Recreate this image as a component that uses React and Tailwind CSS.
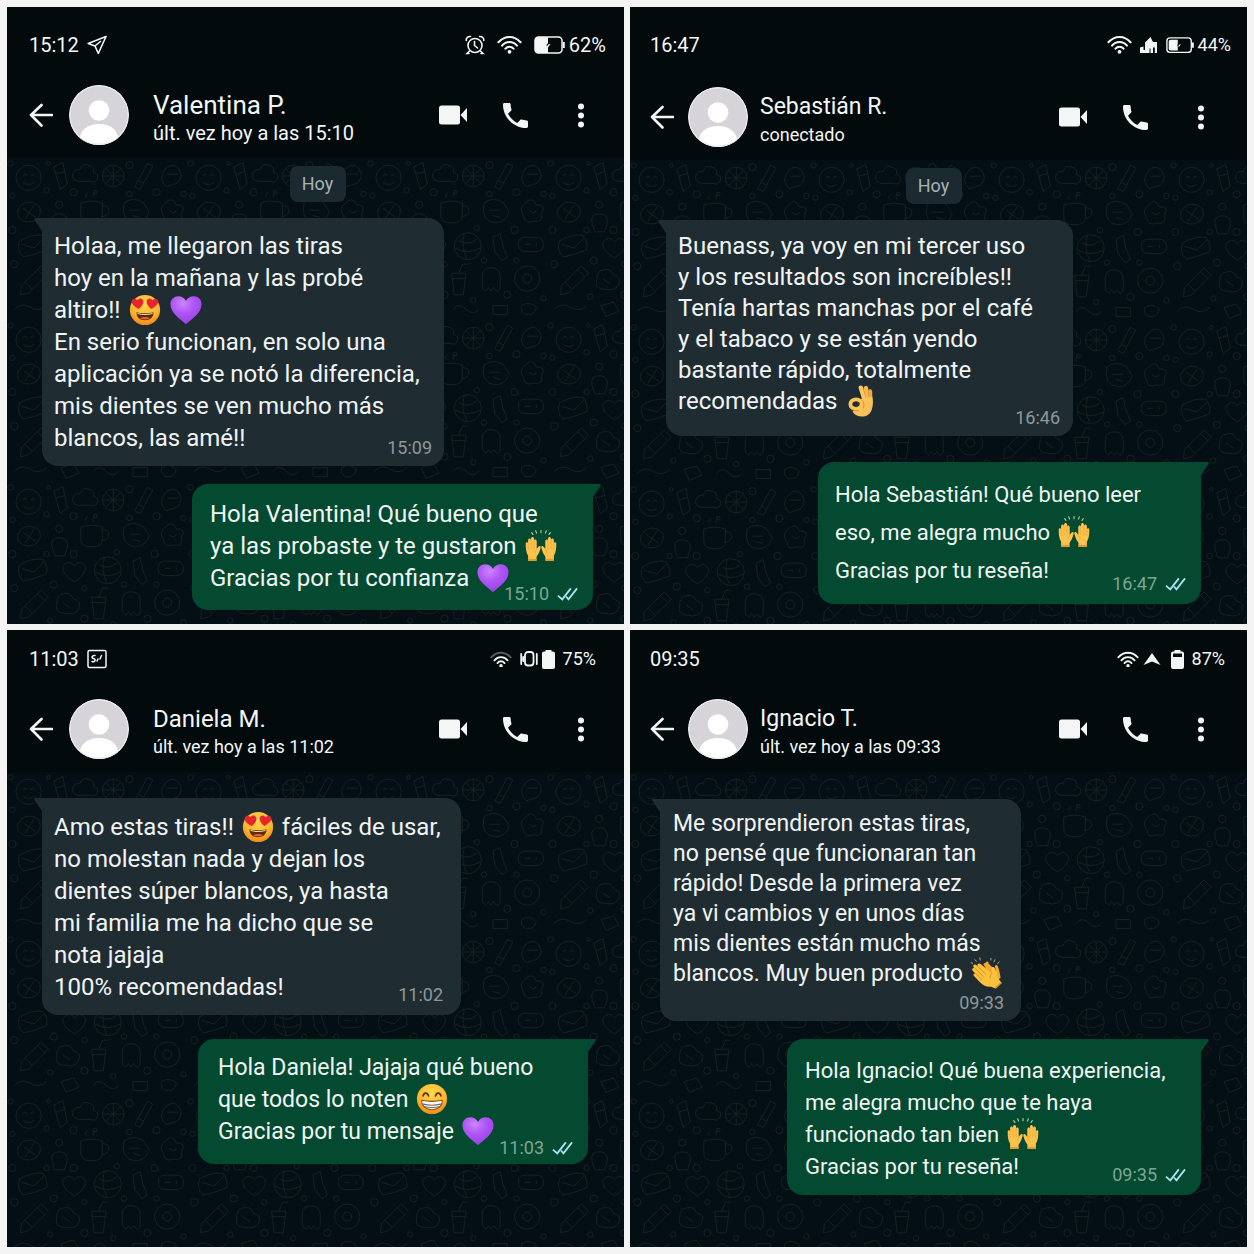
import { clsx } from 'clsx';

/* Emoji */
function Emoji({ label, children }) {
  return (
    <svg role="img" aria-label={label} viewBox="0 0 36 36" className="mx-0.5 -mt-1 inline-block size-8 align-middle">
      {children}
    </svg>
  );
}

const HeartEyes = () => (
  <Emoji label="cara con ojos de corazón">
    <defs>
      <radialGradient id="face" cx="0.5" cy="0.3" r="0.75">
        <stop offset="0" stopColor="#ffd94a" />
        <stop offset="0.6" stopColor="#fdb62f" />
        <stop offset="1" stopColor="#ee8112" />
      </radialGradient>
    </defs>
    <circle cx="18" cy="18" r="17" fill="url(#face)" />
    <path d="M11 17C6.500 14.500 2.500 11.500 3 8C3.500 4.800 7.500 4.200 9.600 7C11.500 4.200 15.500 4.700 16.200 8C16.700 11.500 14 14.500 11 17Z" fill="#e5262d" />
    <path d="M25 17C29.500 14.500 33.500 11.500 33 8C32.500 4.800 28.500 4.200 26.400 7C24.500 4.200 20.500 4.700 19.800 8C19.300 11.500 22 14.500 25 17Z" fill="#e5262d" />
    <path d="M8.500 20.500C14 22 22 22 27.500 20.500C28 25.500 24 29.500 18 29.500S8 25.500 8.500 20.500Z" fill="#5f2a0a" />
    <path d="M9.500 21.500C15 23 21 23 26.500 21.500V22.600C21 24 15 24 9.500 22.600Z" fill="#f3dcb8" />
    <path d="M12.500 27.200C15 25.500 21 25.500 23.500 27.200C21.500 29 14.500 29 12.500 27.200Z" fill="#d8683a" />
  </Emoji>
);

const Grin = () => (
  <Emoji label="cara sonriente">
    <circle cx="18" cy="18" r="17" fill="url(#face)" />
    <path d="M8 14.500C9 10.500 13 10.500 14 14.500M22 14.500C23 10.500 27 10.500 28 14.500" fill="none" stroke="#59300d" strokeWidth="2" strokeLinecap="round" />
    <path d="M6.500 19.500C14 21 22 21 29.500 19.500C30 26 25 30 18 30S6 26 6.500 19.500Z" fill="#fffdf5" stroke="#8a4b12" strokeWidth="1.200" />
    <path d="M7 23.500C14 25.500 22 25.500 29 23.500M8.500 26.500C15 28 21 28 27.500 26.500" fill="none" stroke="#6f6a62" strokeWidth="1.300" />
  </Emoji>
);

const PurpleHeart = () => (
  <Emoji label="corazón morado">
    <defs>
      <radialGradient id="heart" cx="0.4" cy="0.25" r="0.8">
        <stop offset="0" stopColor="#cb86fb" />
        <stop offset="0.45" stopColor="#b055f6" />
        <stop offset="1" stopColor="#9540e0" />
      </radialGradient>
    </defs>
    <path d="M18 34C12 28.500 0.500 21.500 0.500 11.500C0.500 6 4.500 2.500 9.300 2.500C13 2.500 16.500 4.600 18 8C19.500 4.600 23 2.500 26.700 2.500C31.500 2.500 35.500 6 35.500 11.500C35.500 21.500 24 28.500 18 34Z" fill="url(#heart)" />
  </Emoji>
);

const RaisedHand = () => (
  <>
    <path d="M3.500 34.500V29C1.300 25.500 0.700 20.500 0.800 15.500C0.800 13.300 3.200 13.300 3.500 15.300V11.500C3.600 8.800 6.500 8.800 6.800 11.200V9.800C7.100 7.300 10 7.400 10.200 10V12C10.600 10 13 10.200 13.200 12.500V21.500C14 20 15 18.500 16.300 18C18 17.700 17.900 19.800 17.200 21.500C16 25.500 14.800 28 13 30V34.500Z" fill="#fcc34c" />
    <path d="M3.500 16V22M6.800 11.500V21.500M10.200 12V21.500M13.200 21.500C12 22.500 11.500 24 11.500 25.500" fill="none" stroke="#e6a33a" strokeWidth="0.800" strokeLinecap="round" />
    <path d="M3.500 32.500H13V34.500H3.500Z" fill="#e99a2b" />
  </>
);

const RaisedHands = () => (
  <Emoji label="manos levantadas">
    <RaisedHand />
    <g transform="translate(36 0) scale(-1 1)">
      <RaisedHand />
    </g>
    <path d="M9 5L7.500 3M13 3.500L12 0.800M18 3V0.500M23 3.500L24 0.800M27 5L28.500 3" stroke="#c3cf9c" strokeWidth="1.200" strokeLinecap="round" />
  </Emoji>
);

const OkHand = () => (
  <Emoji label="mano en señal de ok">
    <g fill="none" strokeLinecap="round">
      <path d="M28.300 7L28.500 20" stroke="#eda944" strokeWidth="4.600" />
      <path d="M23.500 3.500L25.800 18" stroke="#f6b94f" strokeWidth="5" />
      <path d="M17.800 3L22.500 18" stroke="#fbc862" strokeWidth="5" />
      <path d="M20.500 4L24 15M26 5.500L27.200 16" stroke="#d98f30" strokeWidth="0.800" />
    </g>
    <path d="M19 15L30.700 13C31.800 18 31.800 23 30 28C28 33 24 35.500 19 35.500C14.500 35.500 10.500 33.500 8.500 30L14 25Z" fill="#f9c159" />
    <ellipse cx="12.500" cy="21.500" rx="6.400" ry="5.200" fill="none" stroke="#fbc55c" strokeWidth="4.600" />
    <ellipse cx="12.500" cy="21.500" rx="4" ry="2.900" fill="#26302f" />
    <path d="M5.500 25.500C7.500 28.500 11 29.500 15 28.500M19.500 17.500C21.500 19.500 22 23 20.500 26" fill="none" stroke="#d98f30" strokeWidth="1" strokeLinecap="round" />
  </Emoji>
);

const Clap = () => (
  <Emoji label="aplauso">
    <path d="M15 8L18.500 5.500C20 4.500 21.500 6 20.800 7.400L29.500 16L28.200 11.500C27.700 9 30.200 8.300 31.200 10.300C33 14.500 33.500 18 34.500 23L27 30Z" fill="#f2aa30" />
    <path d="M4 11.500C2.800 9.500 5 7.500 6.800 9L8.500 10.500C7.500 8 10 6.300 12 8L24.500 18.500C25 16.500 24.300 14.500 24.300 13C24.300 10.700 27 10.700 28 12.700C30 17 30.500 20 31.500 24L35.500 29L28.500 35.500L24 33.500C18 34 14.500 31.500 11 28L4.500 21.500C3 20 4.500 18 6.300 18.800L3 15.500C1.500 13.500 3.500 11.500 5.300 12.800Z" fill="#fdc23d" />
    <path d="M5.300 12.500L15 22M8.500 10.500L18 19.500M6.300 18.800L13 25M24.500 18.500C23 20 22.500 21.500 22.800 23.500" fill="none" stroke="#d98a1c" strokeWidth="1" strokeLinecap="round" />
    <path d="M28.500 35L35.300 28.800" stroke="#e08f20" strokeWidth="1.600" />
    <path d="M7.500 5L5.500 3M11.500 3.500L11 1M3 7L1 6.500M27 5.500L28 3M31 7.500L33 5.500M23.500 3.500V1.500" stroke="#a9a68c" strokeWidth="1.100" strokeLinecap="round" />
  </Emoji>
);

/* Status bar icons */
const PaperPlane = () => (
  <svg viewBox="0 0 20 20" className="size-5" fill="none" stroke="currentColor" strokeWidth="1.600" strokeLinejoin="round">
    <path d="M19 1.500L1.200 8.500L8 11L11.300 18.500L19 1.500ZM8 11L14 6" />
  </svg>
);

const Screenshot = () => (
  <svg viewBox="0 0 20 20" className="size-5" fill="none" stroke="currentColor" strokeWidth="1.500" strokeLinecap="round">
    <rect x="1" y="1.500" width="18" height="17" rx="1.500" />
    <path d="M8 6.500C5 6 4 9 6.500 9.500C9.500 10 8 13.500 5 12.500M10 12L11 10M13 10L14.500 6.500" />
  </svg>
);

const Alarm = () => (
  <svg viewBox="0 0 20 20" className="size-5" fill="none" stroke="currentColor" strokeWidth="1.600" strokeLinecap="round">
    <circle cx="10" cy="10.500" r="7" />
    <path d="M1.200 5.500C1 3 3 1.200 5.500 1.500M18.800 5.500C19 3 17 1.200 14.500 1.500M4.500 16L2 18.500H4M15.500 16L18 18.500H16M9.500 6.500V10.500L12.500 13" />
  </svg>
);

const Wifi = ({ size = 'w-[25px]', weak = false }) => (
  <svg viewBox="0 0 26 20" className={size} fill="none" stroke="currentColor" strokeWidth="2.200" strokeLinecap="round">
    <path d="M1.500 7.500C8 0.200 18 0.200 24.500 7.500" opacity={weak ? 0.35 : 1} />
    <path d="M5.200 11C9.500 6 16.500 6 20.800 11M8.800 14.200C11.200 11.500 14.800 11.500 17.200 14.200" />
    <circle cx="13" cy="17.500" r="2" fill="currentColor" stroke="none" />
  </svg>
);

const Signal = () => (
  <svg viewBox="0 0 18 18" className="size-[18px]" fill="currentColor">
    <path d="M0 11.500L3.500 10.500V14H5V6.500L10.500 1L13 6H17V17H14.800V11.500H13V17H10.500V12.500H9.500V17H0Z" />
  </svg>
);

const Triangle = () => (
  <svg viewBox="0 0 18 14" className="w-[18px]" fill="currentColor">
    <path d="M9 1L17.500 13L9 9.500L0.500 13Z" />
  </svg>
);

const Vibrate = () => (
  <svg viewBox="0 0 18 18" className="size-[18px]" fill="none" stroke="currentColor" strokeWidth="1.800" strokeLinecap="round">
    <rect x="5" y="2" width="8.500" height="13.500" rx="3" />
    <path d="M1.200 4V14M16.800 4V14M3.200 7V11" />
  </svg>
);

const BatteryWide = ({ level, size }) => (
  <svg viewBox="0 0 31 18" className={size} fill="none">
    <rect x="1" y="1" width="27" height="16" rx="3.500" stroke="currentColor" strokeWidth="1.500" />
    <path d={level > 50 ? 'M1 4Q1 1 4 1H14V17H4Q1 17 1 14Z' : 'M3 5Q3 3 5 3H13V15H5Q3 15 3 13Z'} fill="currentColor" />
    <path d="M14.500 6.500L12 9.500H14V12L16 8.500H14.500Z" fill="#020a0c" />
    <path d="M14 8.500V11.500L16.500 8Z" fill="currentColor" />
    <path d="M29.800 6V12" stroke="currentColor" strokeWidth="2" />
  </svg>
);

const BatteryTall = ({ level }) => (
  <svg viewBox="0 0 13 19" className="h-[19px]">
    <path d="M3.500 0H9.500V1.500H11Q13 1.500 13 3.500V17Q13 19 11 19H2Q0 19 0 17V3.500Q0 1.500 2 1.500H3.500Z" fill="currentColor" />
    {level === 87 && <rect x="2" y="3.500" width="9" height="3.500" fill="#020a0c" />}
  </svg>
);

/* Header icons */
const BackArrow = () => (
  <svg viewBox="0 0 24 24" className="size-6" fill="none" stroke="currentColor" strokeWidth="2.600" strokeLinecap="round" strokeLinejoin="round">
    <path d="M12.500 2L2 12L12.500 22.500M2 12H23" />
  </svg>
);

const Avatar = () => (
  <svg viewBox="0 0 60 60" className="size-[60px] shrink-0 rounded-full">
    <circle cx="30" cy="30" r="30" fill="#d6d4d8" />
    <circle cx="30" cy="25.500" r="10.300" fill="#fff" />
    <path d="M10 55C12 44 19 39 30 39S48 44 50 55L46 60H14Z" fill="#fff" />
    <circle cx="30" cy="30" r="29.300" fill="none" stroke="#ebeaec" strokeWidth="1.400" />
  </svg>
);

const VideoIcon = () => (
  <svg viewBox="0 0 28 20" className="w-7" fill="currentColor">
    <rect x="0" y="0.500" width="21" height="19" rx="2.500" />
    <path d="M21.500 10L28 3V17Z" />
  </svg>
);

const PhoneIcon = () => (
  <svg viewBox="3 3 18 18" className="size-[25px]" fill="currentColor">
    <path d="M6.620 10.790c1.440 2.830 3.760 5.140 6.590 6.590l2.200-2.200c.270-.270.670-.360 1.020-.240 1.120.370 2.330.570 3.570.570.550 0 1 .450 1 1V20c0 .550-.450 1-1 1-9.390 0-17-7.610-17-17 0-.550.450-1 1-1h3.500c.550 0 1 .450 1 1 0 1.250.200 2.450.570 3.570.110.350.030.740-.250 1.020l-2.200 2.200z" />
  </svg>
);

const MoreIcon = () => (
  <svg viewBox="0 0 6 25" className="h-[25px]" fill="currentColor">
    <circle cx="3" cy="3.500" r="3" />
    <circle cx="3" cy="12.500" r="3" />
    <circle cx="3" cy="21.500" r="3" />
  </svg>
);

const Ticks = () => (
  <svg role="img" aria-label="leído" viewBox="0 0 22 15" className="w-[21px]" fill="none" stroke="#a5e6f2" strokeWidth="1.900">
    <path d="M1 9L5.500 13L14.500 1.500M9.500 10L12 13L21 1.500" />
  </svg>
);

/* Chat wallpaper */
function Wallpaper({ id }) {
  return (
    <svg aria-hidden="true" className="absolute inset-0 size-full">
      <defs>
        <pattern id={id} width="200" height="180" patternUnits="userSpaceOnUse" patternTransform="scale(0.9)">
          <g fill="none" stroke="#192021" strokeWidth="1">
            <circle cx="24" cy="22" r="14" />
            <path d="M18 20q2-4 4 0M26 20q2-4 4 0M18 27q6 5 12 0" />
            <path d="M52 10l10-5 5 24-8 6zM54 18l10-3" />
            <path d="M80 26q-8-1-7-8 1-6 8-5 3-8 10-5 7 2 5 8 7 2 4 8-2 4-7 2z" />
            <circle cx="118" cy="20" r="12" />
            <path d="M118 8v24M106 20h24M110 12l16 16M126 12l-16 16" />
            <path d="M142 32l14-26 6 3-14 26zM146 25l6 3" />
            <path d="M176 12q8-8 15 0 6 9-2 16l-12 4q-10-9-1-20M178 18h12" />
            <path d="M12 58q6-12 18-8 10 4 6 14-6 10-18 6-8-4-6-12M18 56l14 10M30 52l-10 16" />
            <circle cx="58" cy="52" r="4" />
            <path d="M50 72q-2-10 8-10t9 10l-3 10H53z" />
            <path d="M82 50q12-4 24 0v14q0 8-12 8t-12-8zM106 53q8 0 7 6t-8 6M88 44q-2-4 2-6M96 44q-2-4 2-6" />
            <path d="M130 50q10-8 22 0l6 10q-4 12-16 12-16-2-12-22M136 58h12M140 64l8 2" />
            <path d="M176 50q8-8 12 2 12 0 6 9 2 12-9 9-10 4-11-6-6-8 2-14M180 58q6 6 8 0" />
            <path d="M14 92q14-8 26-6 6 8 4 16-14 6-26 8-8-8-4-18M16 96l14 4 12-12" />
            <path d="M62 94q6-9 13-1 7-8 12 1 2 8-12 17-14-8-13-17" />
            <circle cx="112" cy="98" r="15" />
            <path d="M102 92q10 6 20-2M98 100q14 8 28 0M108 84q-4 14 3 28" />
            <path d="M140 88l8-4 3 14 5 12-6 4-8-10z" />
            <path d="M168 96q0-8 8-8h12q8 0 8 8t-8 8h-12q-8 0-8-8M175 96h6M188 94v4" />
            <path d="M16 142l22-22 8 8-22 22-9 2zM34 124l8 8M20 138l8 8" />
            <path d="M58 126q12-6 16 4 10 2 5 12-4 6-14 4-12 0-10-10 0-6 3-10M62 134l8 6" />
            <path d="M94 128h16l-3 24H97zM94 134h16M102 128l4-10h6" />
            <path d="M128 132q0-10 10-10t10 10v10q0 6-4 6l-3-4-3 4-3-4-3 4q-4-2-4-6z" />
            <circle cx="178" cy="134" r="14" />
            <circle cx="178" cy="134" r="5" />
            <path d="M8 168q8-8 18-2t18-2M60 164l14-4 6 10-14 6zM96 168q6-8 14 0t14 0M140 164h16v10h-16zM172 164q8-6 16 2-2 10-12 8-6-4-4-10" />
            <circle cx="44" cy="36" r="3" />
            <circle cx="74" cy="38" r="4" />
            <circle cx="98" cy="38" r="2" />
            <circle cx="136" cy="40" r="3" />
            <circle cx="166" cy="38" r="4" />
            <circle cx="6" cy="42" r="3" />
            <circle cx="44" cy="80" r="3" />
            <circle cx="74" cy="80" r="4" />
            <circle cx="122" cy="78" r="3" />
            <circle cx="164" cy="80" r="4" />
            <circle cx="6" cy="80" r="4" />
            <circle cx="52" cy="114" r="4" />
            <circle cx="86" cy="118" r="3" />
            <circle cx="130" cy="114" r="3" />
            <circle cx="166" cy="114" r="3" />
            <circle cx="8" cy="118" r="4" />
            <circle cx="48" cy="154" r="3" />
            <circle cx="86" cy="152" r="4" />
            <circle cx="118" cy="158" r="3" />
            <circle cx="156" cy="152" r="4" />
            <circle cx="196" cy="156" r="3" />
            <circle cx="4" cy="6" r="3" />
            <circle cx="46" cy="6" r="2" />
            <circle cx="136" cy="8" r="4" />
            <circle cx="196" cy="40" r="3" />
          </g>
        </pattern>
      </defs>
      <rect width="100%" height="100%" fill={`url(#${id})`} />
    </svg>
  );
}

function Bubble({ message }) {
  const { out, lines, time, box, meta } = message;
  return (
    <div
      className={clsx(
        'relative max-w-full rounded-2xl text-[#f1f4f4]',
        out ? 'self-end rounded-tr-none bg-[#034a30]' : 'self-start rounded-tl-none bg-[#1f2d33]',
        box
      )}
    >
      <svg
        viewBox="0 0 9 14"
        aria-hidden="true"
        className={clsx('absolute top-0 w-[9px]', out ? '-right-2 text-[#034a30]' : '-left-2 -scale-x-100 text-[#1f2d33]')}
      >
        <path d="M0 0H8Q9.500 0.500 8.500 2L1 13H0Z" fill="currentColor" />
      </svg>
      {lines.map((line, i) => (
        <p key={i} className="whitespace-nowrap">{line}</p>
      ))}
      <div className={clsx('absolute flex items-center gap-2 text-lg leading-5', out ? 'text-[#7fa596]' : 'text-[#8d989d]', meta)}>
        <time>{time}</time>
        {out && <Ticks />}
      </div>
    </div>
  );
}

function Chat({ chat }) {
  return (
    <section className="flex flex-col overflow-hidden bg-[#020a0c] font-[Roboto,sans-serif] text-[#f4f6f6]">
      <header className={clsx('pb-[13px]', chat.header)}>
        <div className={clsx('flex items-center justify-between text-xl leading-6', chat.status)}>
          <div className="flex items-center gap-2">
            <time>{chat.clock}</time>
            {chat.clockIcon}
          </div>
          <div className="flex h-6 items-center">{chat.indicators}</div>
        </div>
        <div className={clsx('flex items-center', chat.bar)}>
          <button type="button" aria-label="Volver" className={chat.back}><BackArrow /></button>
          <Avatar />
          <div className={clsx('pt-1', chat.person)}>
            <h2 className={clsx('leading-8', chat.nameSize)}>{chat.name}</h2>
            <p className={clsx('leading-6', chat.seenSize)}>{chat.seen}</p>
          </div>
          <div className="ml-auto flex items-center">
            <button type="button" aria-label="Videollamada"><VideoIcon /></button>
            <button type="button" aria-label="Llamar" className="ml-9"><PhoneIcon /></button>
            <button type="button" aria-label="Más opciones" className="ml-[50px]"><MoreIcon /></button>
          </div>
        </div>
      </header>
      <div className="relative flex-1 bg-[#030f15]">
        <Wallpaper id={chat.id} />
        <div className={clsx('relative flex flex-col', chat.body)}>
          {chat.day && (
            <span className="mb-4 w-14 self-center rounded-lg bg-[#1a2a30] text-center text-lg leading-9 text-[#aab3b6]">{chat.day}</span>
          )}
          {chat.messages.map((message) => (
            <Bubble key={message.time} message={message} />
          ))}
        </div>
      </div>
    </section>
  );
}

const chats = [
  {
    id: 'valentina',
    name: 'Valentina P.',
    nameSize: 'text-[26px]',
    seen: 'últ. vez hoy a las 15:10',
    seenSize: 'text-xl',
    clock: '15:12',
    clockIcon: <PaperPlane />,
    indicators: (
      <>
        <Alarm />
        <span className="mx-3"><Wifi /></span>
        <BatteryWide level={62} size="h-[18px]" />
        <span className="ml-1">62%</span>
      </>
    ),
    header: 'pt-[26px]',
    status: 'pl-[22px] pr-[18px]',
    bar: 'mt-7 pl-[22px] pr-10',
    back: 'mr-4',
    person: 'ml-6',
    body: 'pt-2 pl-[35px] pr-[31px]',
    day: 'Hoy',
    messages: [
      {
        time: '15:09',
        box: 'w-[402px] pt-3 pb-3 pl-3 text-2xl leading-8',
        meta: 'right-3 bottom-2',
        lines: [
          'Holaa, me llegaron las tiras',
          'hoy en la mañana y las probé',
          <>altiro!! <HeartEyes /> <PurpleHeart /></>,
          'En serio funcionan, en solo una',
          'aplicación ya se notó la diferencia,',
          'mis dientes se ven mucho más',
          'blancos, las amé!!',
        ],
      },
      {
        out: true,
        time: '15:10',
        box: 'mt-[18px] w-[401px] pt-3.5 pb-4 pl-[18px] text-2xl leading-8',
        meta: 'right-[15px] bottom-1.5',
        lines: [
          'Hola Valentina! Qué bueno que',
          <>ya las probaste y te gustaron <RaisedHands /></>,
          <>Gracias por tu confianza <PurpleHeart /></>,
        ],
      },
    ],
  },
  {
    id: 'sebastian',
    name: 'Sebastián R.',
    nameSize: 'text-[23px]',
    seen: 'conectado',
    seenSize: 'text-lg',
    clock: '16:47',
    indicators: (
      <>
        <Wifi />
        <span className="mx-2"><Signal /></span>
        <BatteryWide level={44} size="w-7" />
        <span className="ml-1 text-lg">44%</span>
      </>
    ),
    header: 'pt-[26px]',
    status: 'pl-5 pr-4',
    bar: 'mt-[30px] pl-5 pr-[43px]',
    back: 'mr-3.5',
    person: 'ml-3',
    body: 'pt-2 pl-9 pr-[46px]',
    day: 'Hoy',
    messages: [
      {
        time: '16:46',
        box: 'w-[407px] pt-[11px] pb-[19px] pl-3 text-2xl leading-[31px]',
        meta: 'right-[13px] bottom-2',
        lines: [
          'Buenass, ya voy en mi tercer uso',
          'y los resultados son increíbles!!',
          'Tenía hartas manchas por el café',
          'y el tabaco y se están yendo',
          'bastante rápido, totalmente',
          <>recomendadas <OkHand /></>,
        ],
      },
      {
        out: true,
        time: '16:47',
        box: 'mt-[26px] w-[383px] pt-3.5 pb-3.5 pl-[17px] text-[22px] leading-[38px]',
        meta: 'right-[15px] bottom-2.5',
        lines: [
          'Hola Sebastián! Qué bueno leer',
          <>eso, me alegra mucho <RaisedHands /></>,
          'Gracias por tu reseña!',
        ],
      },
    ],
  },
  {
    id: 'daniela',
    name: 'Daniela M.',
    nameSize: 'text-2xl',
    seen: 'últ. vez hoy a las 11:02',
    seenSize: 'text-lg',
    clock: '11:03',
    clockIcon: <Screenshot />,
    indicators: (
      <>
        <Wifi size="w-[22px]" weak />
        <span className="ml-2 mr-1"><Vibrate /></span>
        <BatteryTall level={75} />
        <span className="ml-2 text-lg">75%</span>
      </>
    ),
    header: 'pt-[17px]',
    status: 'pl-[22px] pr-7',
    bar: 'mt-7 pl-[22px] pr-10',
    back: 'mr-4',
    person: 'ml-6',
    body: 'pt-[26px] pl-[35px] pr-9',
    messages: [
      {
        time: '11:02',
        box: 'w-[419px] pt-[13px] pb-3 pl-3 text-2xl leading-8',
        meta: 'right-[18px] bottom-2.5',
        lines: [
          <>Amo estas tiras!! <HeartEyes /> fáciles de usar,</>,
          'no molestan nada y dejan los',
          'dientes súper blancos, ya hasta',
          'mi familia me ha dicho que se',
          'nota jajaja',
          '100% recomendadas!',
        ],
      },
      {
        out: true,
        time: '11:03',
        box: 'mt-6 w-[390px] pt-[13px] pb-4 pl-5 text-[23px] leading-8',
        meta: 'right-[15px] bottom-1.5',
        lines: [
          'Hola Daniela! Jajaja qué bueno',
          <>que todos lo noten <Grin /></>,
          <>Gracias por tu mensaje <PurpleHeart /></>,
        ],
      },
    ],
  },
  {
    id: 'ignacio',
    name: 'Ignacio T.',
    nameSize: 'text-[23px]',
    seen: 'últ. vez hoy a las 09:33',
    seenSize: 'text-lg',
    clock: '09:35',
    indicators: (
      <>
        <Wifi size="w-[22px]" />
        <span className="ml-1 mr-2.5"><Triangle /></span>
        <BatteryTall level={87} />
        <span className="ml-2 text-lg">87%</span>
      </>
    ),
    header: 'pt-[17px]',
    status: 'pl-5 pr-[22px]',
    bar: 'mt-7 pl-5 pr-[43px]',
    back: 'mr-3.5',
    person: 'ml-3',
    body: 'pt-[27px] pl-[30px] pr-[46px]',
    messages: [
      {
        time: '09:33',
        box: 'w-[361px] pt-2.5 pb-8 pl-[13px] text-[23px] leading-[30px]',
        meta: 'right-[17px] bottom-2',
        lines: [
          'Me sorprendieron estas tiras,',
          'no pensé que funcionaran tan',
          'rápido! Desde la primera vez',
          'ya vi cambios y en unos días',
          'mis dientes están mucho más',
          <>blancos. Muy buen producto <Clap /></>,
        ],
      },
      {
        out: true,
        time: '09:35',
        box: 'mt-[18px] w-[414px] pt-4 pb-3 pl-[18px] text-[22px] leading-8',
        meta: 'right-[15px] bottom-2.5',
        lines: [
          'Hola Ignacio! Qué buena experiencia,',
          'me alegra mucho que te haya',
          <>funcionado tan bien <RaisedHands /></>,
          'Gracias por tu reseña!',
        ],
      },
    ],
  },
];

export default function App() {
  return (
    <main className="grid min-h-screen grid-cols-2 grid-rows-2 gap-1.5 bg-[#f4f4f4] p-[7px]">
      {chats.map((chat) => (
        <Chat key={chat.id} chat={chat} />
      ))}
    </main>
  );
}
